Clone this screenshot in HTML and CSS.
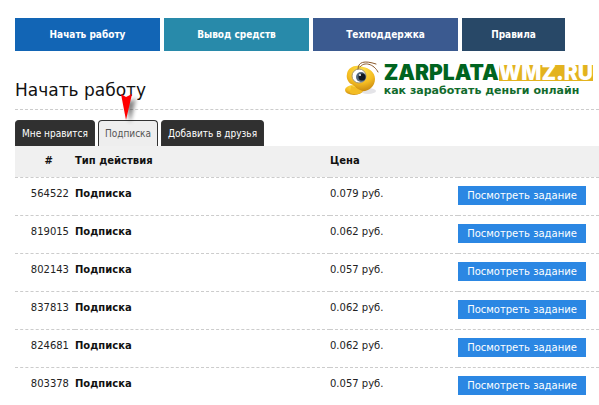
FILE: index.html
```html
<!DOCTYPE html>
<html lang="ru">
  <head>
    <meta charset="UTF-8" />
    <meta name="viewport" content="width=device-width, initial-scale=1.0" />
    <title>Начать работу</title>
    <link rel="stylesheet" href="styles.css">
  </head>
  <body>
    <nav class="menu">
      <a class="menu-start" href="#">Начать работу</a>
      <a class="menu-payout" href="#">Вывод средств</a>
      <a class="menu-support" href="#">Техподдержка</a>
      <a class="menu-rules" href="#">Правила</a>
    </nav>

    <div class="header">
      <h1>Начать работу</h1>
      <a class="logo" href="#">
        <svg class="logo-ant" viewBox="0 0 36 38" aria-hidden="true">
          <defs>
            <radialGradient id="head" cx="0.5" cy="0.2" r="0.8">
              <stop offset="0" stop-color="#ffe44d" />
              <stop offset="0.6" stop-color="#f5bd22" />
              <stop offset="1" stop-color="#c98a10" />
            </radialGradient>
          </defs>
          <ellipse cx="24" cy="31" rx="8" ry="3" fill="#e4e4e8" />
          <ellipse cx="10" cy="30" rx="9" ry="5" fill="url(#head)" />
          <path d="M3 14C4 7 12 4 19 7c6 1 12 5 12 12 0 8-7 13-14 12-5-1-5-5-10-7-3-2-5-6-4-10z" fill="url(#head)" />
          <path d="M7 26c4 0 7 4 12 5-3 4-9 4-13 2z" fill="#f3bd25" />
          <ellipse cx="15" cy="16" rx="7" ry="7" fill="#fff" stroke="#a5966d" />
          <circle cx="17" cy="17" r="5" fill="#53677d" />
          <circle cx="18" cy="17" r="3.5" fill="#101820" />
          <circle cx="16" cy="15" r="1" fill="#fff" />
          <path d="M14 9C14 2 20 0 32 4M16 7c4-6 14-3 18 5" fill="none" stroke="#8b5a2b" stroke-linecap="round" />
        </svg>
        <span class="logo-text">
          <span class="logo-name">ZARPLATA<span class="logo-zone">WMZ.RU</span></span>
          <span class="logo-slogan">как заработать деньги онлайн</span>
        </span>
      </a>
    </div>

    <div class="tabs">
      <button type="button">Мне нравится</button>
      <button type="button" class="active">
        Подписка
        <svg class="pointer" viewBox="0 0 20 32" aria-hidden="true">
          <path d="M5 5l5 4 6-4-6 25z" fill="#000" />
          <path d="M1 1l5 3 6-3-6 26z" fill="#f00" />
        </svg>
      </button>
      <button type="button">Добавить в друзья</button>
    </div>

    <table class="tasks">
      <thead>
        <tr><th class="id">#</th><th class="type">Тип действия</th><th class="price">Цена</th><th class="action"></th></tr>
      </thead>
      <tbody>
        <tr><td class="id">564522</td><td class="type">Подписка</td><td>0.079 руб.</td><td class="action"><button type="button">Посмотреть задание</button></td></tr>
        <tr><td class="id">819015</td><td class="type">Подписка</td><td>0.062 руб.</td><td class="action"><button type="button">Посмотреть задание</button></td></tr>
        <tr><td class="id">802143</td><td class="type">Подписка</td><td>0.057 руб.</td><td class="action"><button type="button">Посмотреть задание</button></td></tr>
        <tr><td class="id">837813</td><td class="type">Подписка</td><td>0.062 руб.</td><td class="action"><button type="button">Посмотреть задание</button></td></tr>
        <tr><td class="id">824681</td><td class="type">Подписка</td><td>0.062 руб.</td><td class="action"><button type="button">Посмотреть задание</button></td></tr>
        <tr><td class="id">803378</td><td class="type">Подписка</td><td>0.057 руб.</td><td class="action"><button type="button">Посмотреть задание</button></td></tr>
      </tbody>
    </table>
  </body>
</html>
```
FILE: styles.css
```css
* {
  margin: 0;
  padding: 0;
  box-sizing: border-box;
}

body {
  padding: 18px 0 0 15px;
  background: #fff;
  color: #222;
  font-family: Verdana, "DejaVu Sans", sans-serif;
  font-size: 10px;
}

button {
  border: none;
  cursor: pointer;
}

.menu {
  display: flex;
  gap: 4px;
  padding-right: 34px;
}

.menu a {
  flex: 145;
  color: #fff;
  font-family: Tahoma, "DejaVu Sans Condensed", "DejaVu Sans", sans-serif;
  font-size: 10px;
  font-weight: bold;
  line-height: 33px;
  text-align: center;
  text-decoration: none;
}

.menu .menu-start {
  background: #1265b5;
}

.menu .menu-payout {
  background: #288aaa;
}

.menu .menu-support {
  background: #3b5a90;
}

.menu .menu-rules {
  flex: 103;
  background: #284867;
}

.header {
  display: flex;
  justify-content: space-between;
  align-items: flex-end;
  padding: 9px 6px 7px 0;
  border-bottom: 1px dashed #ccc;
}

h1 {
  color: #111;
  font-size: 17px;
  font-weight: normal;
  line-height: 24px;
}

.logo {
  display: flex;
  gap: 4px;
  padding-bottom: 3px;
  text-decoration: none;
}

.logo-ant {
  width: 36px;
  height: 38px;
}

.logo-text {
  display: flex;
  flex-direction: column;
  gap: 1px;
  padding-top: 5px;
}

.logo-name {
  display: flex;
  color: #006420;
  font-family: Inter, sans-serif;
  font-size: 21px;
  font-weight: 900;
  line-height: 16px;
}

.logo-zone {
  background: #e3b31f;
  color: #fff;
}

.logo-slogan {
  color: #126b2c;
  font-size: 11px;
  font-weight: bold;
  line-height: 17px;
}

.tabs {
  display: flex;
  gap: 3px;
  margin-top: 10px;
}

.tabs button {
  position: relative;
  height: 26px;
  padding: 0 6px;
  border: 1px solid #333;
  border-bottom: none;
  border-radius: 4px 4px 0 0;
  background: #303030;
  color: #fff;
  font-family: Tahoma, "DejaVu Sans Condensed", "DejaVu Sans", sans-serif;
  font-size: 10px;
}

.tabs .active {
  background: #eee;
  color: #555;
}

.pointer {
  position: absolute;
  top: -28px;
  left: 21px;
  width: 20px;
  height: 32px;
}

.pointer path:first-child {
  filter: blur(2px);
  opacity: 0.5;
}

.tasks {
  width: 100%;
  border-collapse: collapse;
  table-layout: fixed;
}

.tasks th,
.tasks td {
  border-bottom: 1px dashed #ccc;
  text-align: left;
  vertical-align: top;
}

.tasks th {
  height: 31px;
  background: #f0f0f0;
  color: #111;
  line-height: 30px;
}

.tasks td {
  height: 38px;
  padding-top: 8px;
  line-height: 15px;
}

.tasks .id {
  width: 60px;
  padding-right: 6px;
  text-align: right;
}

.tasks th.id {
  padding-right: 22px;
}

.tasks .type {
  color: #111;
  font-weight: bold;
}

.tasks .price {
  width: 128px;
}

.tasks .action {
  width: 141px;
}

.action button {
  width: 128px;
  height: 19px;
  background: #2b87e3;
  color: #fff;
  font-family: Verdana, "DejaVu Sans", sans-serif;
  font-size: 10px;
}
```
